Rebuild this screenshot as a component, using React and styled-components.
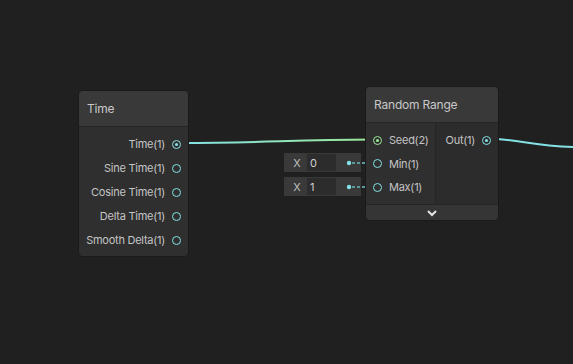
import React from 'react';
import styled, { createGlobalStyle } from 'styled-components';

const Global = createGlobalStyle`
  html, body { margin: 0; padding: 0; background: #202020; }
  body { font-family: Inter, "Noto Sans", sans-serif; }
`;

const Canvas = styled.div`
  position: relative;
  width: 573px;
  height: 364px;
  overflow: hidden;
  background: #202020;
`;

const Wires = styled.svg`
  position: absolute;
  left: 0;
  top: 0;
  z-index: 1;
  pointer-events: none;
`;

const Node = styled.div`
  position: absolute;
  left: ${p => p.x}px;
  top: ${p => p.y}px;
  width: ${p => p.w}px;
  display: flex;
  flex-direction: column;
  background: #2f2f2f;
  border: 1px solid #1a1a1a;
  border-radius: 5px;
  overflow: hidden;
  box-sizing: border-box;
  z-index: 2;
`;

const Header = styled.div`
  height: 35px;
  display: flex;
  align-items: center;
  padding-left: 8px;
  background: #393939;
  border-bottom: 1px solid #252525;
  color: #c8c8c8;
  font-size: 12px;
  letter-spacing: -0.2px;
`;

const Body = styled.div`
  display: flex;
`;

const Column = styled.div`
  flex: ${p => (p.grow ? 1 : 'none')};
  width: ${p => (p.w ? `${p.w}px` : 'auto')};
  display: flex;
  flex-direction: column;
  padding: ${p => p.pad || '5px 0 4px'};
  background: ${p => p.bg || '#2f2f2f'};
  border-right: ${p => (p.divider ? '1px solid #252525' : 'none')};
`;

const Row = styled.div`
  height: ${p => p.h || 24}px;
  display: flex;
  align-items: center;
  justify-content: ${p => (p.out ? 'flex-end' : 'flex-start')};
  gap: 7px;
  padding: ${p => (p.out ? '0 7px 0 0' : '0 0 0 7px')};
  color: #c4c4c4;
  font-size: 11px;
  letter-spacing: -0.25px;
  white-space: nowrap;
`;

const PortRing = styled.span`
  width: 7px;
  height: 7px;
  border-radius: 50%;
  border: 1.5px solid ${p => p.color};
  display: flex;
  align-items: center;
  justify-content: center;
  flex: none;
  &::after {
    content: '';
    width: 3px;
    height: 3px;
    border-radius: 50%;
    background: ${p => (p.on ? p.color : 'transparent')};
  }
`;

const Footer = styled.div`
  height: 15px;
  display: flex;
  align-items: center;
  justify-content: center;
  background: #353535;
  border-top: 1px solid #252525;
`;

const Field = styled.div`
  position: absolute;
  left: ${p => p.x}px;
  top: ${p => p.y}px;
  width: 77px;
  height: 19px;
  display: flex;
  align-items: center;
  background: #393939;
  box-sizing: border-box;
  padding: 1px;
`;

const FieldLabel = styled.span`
  width: 22px;
  padding-left: 2px;
  box-sizing: border-box;
  text-align: center;
  color: #c0c0c0;
  font-size: 11px;
`;

const FieldValue = styled.span`
  width: 29px;
  height: 17px;
  display: flex;
  align-items: center;
  padding-left: 3px;
  box-sizing: border-box;
  background: #2c2c2c;
  color: #d0d0d0;
  font-size: 11px;
`;

const CYAN = '#84e1e4';
const GREEN = '#9be897';

const Port = ({ color = CYAN, on }) => <PortRing color={color} on={on ? 1 : 0} />;

const timeOutputs = ['Time(1)', 'Sine Time(1)', 'Cosine Time(1)', 'Delta Time(1)', 'Smooth Delta(1)'];

export default function App() {
  return (
    <Canvas>
      <Global />
      <Wires width="573" height="364">
        <defs>
          <linearGradient id="tg" x1="181" y1="0" x2="373" y2="0" gradientUnits="userSpaceOnUse">
            <stop offset="0" stopColor={CYAN} />
            <stop offset="1" stopColor={GREEN} />
          </linearGradient>
        </defs>
        <path d="M181 143 C 260 143, 290 140, 373 139.5" stroke="url(#tg)" strokeWidth="2" fill="none" />
        <path d="M491 139 C 520 139, 530 146, 575 147" stroke={CYAN} strokeWidth="2" fill="none" />
        <g stroke="#5b9a9c" strokeWidth="2">
          <line x1="352" y1="163" x2="373" y2="163" strokeDasharray="3 2" />
          <line x1="352" y1="187" x2="373" y2="187" strokeDasharray="3 2" />
        </g>
        <circle cx="349" cy="163" r="2.2" fill={CYAN} />
        <circle cx="349" cy="187" r="2.2" fill={CYAN} />
      </Wires>

      <Node x={78} y={90} w={111}>
        <Header>Time</Header>
        <Column>
          {timeOutputs.map((t, i) => (
            <Row key={t} out>
              {t}
              <Port on={i === 0} />
            </Row>
          ))}
        </Column>
      </Node>

      <Field x={284} y={153}>
        <FieldLabel>X</FieldLabel>
        <FieldValue>0</FieldValue>
      </Field>
      <Field x={284} y={177}>
        <FieldLabel>X</FieldLabel>
        <FieldValue>1</FieldValue>
      </Field>

      <Node x={365} y={86} w={134}>
        <Header>Random Range</Header>
        <Body>
          <Column w={69} divider pad="5px 0 5px">
            <Row h={24}>
              <Port color={GREEN} on />
              Seed(2)
            </Row>
            <Row h={23}>
              <Port />
              Min(1)
            </Row>
            <Row h={24}>
              <Port />
              Max(1)
            </Row>
          </Column>
          <Column grow bg="#2c2c2c" pad="5px 0 5px">
            <Row out h={24}>
              Out(1)
              <Port on />
            </Row>
          </Column>
        </Body>
        <Footer>
          <svg width="12" height="8" viewBox="0 0 12 8">
            <path d="M2 2 L6 6 L10 2" stroke="#e6e6e6" strokeWidth="2" fill="none" />
          </svg>
        </Footer>
      </Node>
    </Canvas>
  );
}
